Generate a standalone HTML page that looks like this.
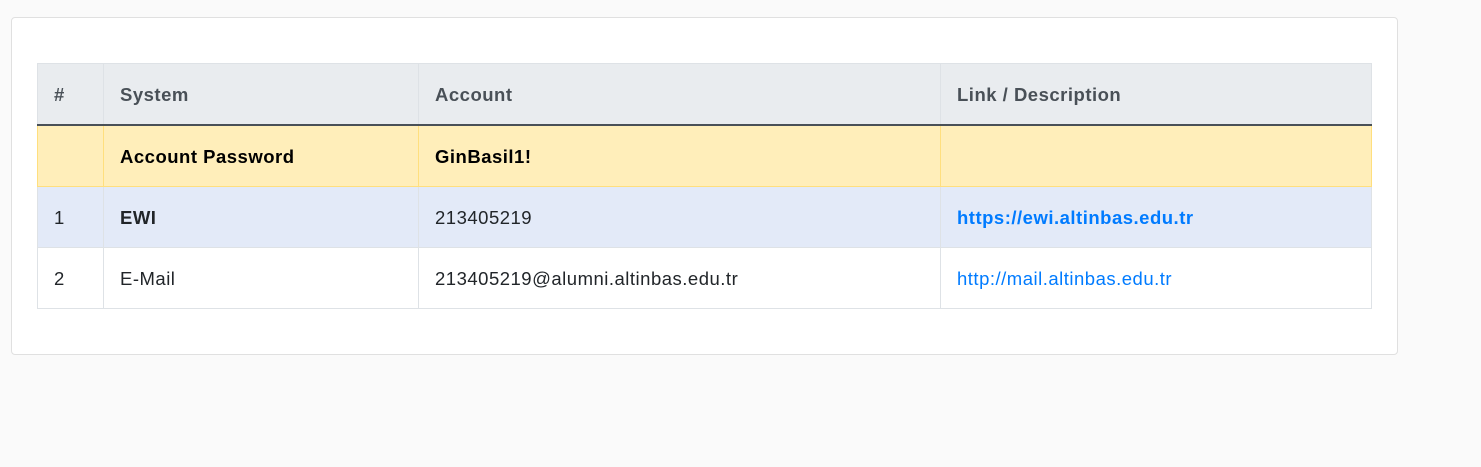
<!DOCTYPE html>
<html><head><style>
html,body{margin:0;padding:0;background:#fafafa;width:1481px;height:467px;overflow:hidden;font-family:"Liberation Sans",sans-serif;}
.card{position:absolute;left:11px;top:17px;width:1385px;height:336px;background:#fff;border:1px solid #e0e0e0;border-radius:4px;}
table{position:absolute;left:25px;top:45px;border-collapse:collapse;width:1335px;font-size:18.5px;letter-spacing:0.5px;color:#212529;}
td,th{border:1px solid #dee2e6;padding:2px 0 0 16px;text-align:left;height:58px;}
th{background:#e9ecef;color:#495057;font-weight:bold;border-bottom:2px solid #495057;height:58px;}
tr.w td{background:#ffeeba;border-color:#ffdf7e;font-weight:bold;color:#000;}
tr.i td{background:#e3eaf8;}
a{color:#007bff;text-decoration:none;}
</style></head><body>
<div class="card">
<table>
<tr><th style="width:49px">#</th><th style="width:298px">System</th><th style="width:505px">Account</th><th>Link / Description</th></tr>
<tr class="w"><td></td><td>Account Password</td><td>GinBasil1!</td><td></td></tr>
<tr class="i"><td>1</td><td><b>EWI</b></td><td>213405219</td><td><a href="#"><b>https://ewi.altinbas.edu.tr</b></a></td></tr>
<tr><td>2</td><td>E-Mail</td><td>213405219@alumni.altinbas.edu.tr</td><td><a href="#">http://mail.altinbas.edu.tr</a></td></tr>
</table>
</div>
</body></html>
